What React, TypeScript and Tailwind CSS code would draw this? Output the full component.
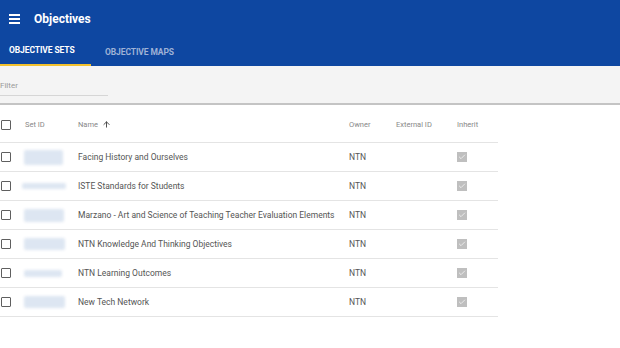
import { ArrowUp, Check } from 'lucide-react';

const rows = [
  { name: 'Facing History and Ourselves', id: 'w-[39px] h-[15px] ml-[0px]' },
  { name: 'ISTE Standards for Students', id: 'w-[44px] h-[6px] -ml-[2px]' },
  { name: 'Marzano - Art and Science of Teaching Teacher Evaluation Elements', id: 'w-[40px] h-[13px] ml-[0px]' },
  { name: 'NTN Knowledge And Thinking Objectives', id: 'w-[41px] h-[12px] ml-[0px]' },
  { name: 'NTN Learning Outcomes', id: 'w-[38px] h-[7px] ml-[0px]' },
  { name: 'New Tech Network', id: 'w-[41px] h-[12px] ml-[0px]' },
];

function Box() {
  return <div className="w-[10px] h-[10px] border-[1.5px] border-[#5f5f5f] rounded-[1px] bg-white" />;
}

function Inherit() {
  return (
    <div className="w-[10px] h-[10px] bg-[#bfbfbf] flex items-center justify-center">
      <Check size={8} strokeWidth={2} className="text-white" />
    </div>
  );
}

export default function App() {
  return (
    <div className="w-[620px] h-[348px] bg-white overflow-hidden font-['Roboto',sans-serif]">
      {/* app bar */}
      <div className="bg-[#0e47a1] h-[66px] flex flex-col">
        <div className="flex items-center h-[36px] pl-[9px] pt-[1px]">
          <div className="flex flex-col gap-[2px] w-[11px]">
            <div className="h-[2px] bg-white" />
            <div className="h-[2px] bg-white" />
            <div className="h-[2px] bg-white" />
          </div>
          <span className="ml-[14px] text-white font-bold text-[12px]">Objectives</span>
        </div>
        <div className="flex h-[30px]">
          <div className="w-[91px] flex flex-col">
            <div className="flex-1 flex items-center pl-[9px] pt-[1px] text-white font-bold text-[8.5px] tracking-[-0.1px]">
              OBJECTIVE SETS
            </div>
            <div className="h-[2px] bg-[#f2c12e]" />
          </div>
          <div className="pl-[14px] flex items-start pt-[10px] text-[#9fb2d6] font-bold text-[8.5px] tracking-[-0.1px]">
            OBJECTIVE MAPS
          </div>
        </div>
      </div>

      {/* filter bar */}
      <div className="bg-[#f4f4f4] h-[39px] border-b-[2px] border-[#c4c4c4] pt-[14px]">
        <div className="w-[108px] border-b border-[#d6d6d6] pb-[3px] text-[8px] text-[#9a9a9a]">Filter</div>
      </div>

      {/* table */}
      <div className="w-[498px] text-[8.5px] text-[#555]">
        <div className="flex items-center h-[38px] pt-[2px] border-b border-[#e4e4e4] text-[#888] text-[7.5px]">
          <div className="w-[24px] pl-[1px]"><Box /></div>
          <div className="w-[54px] pl-[1px]">Set ID</div>
          <div className="w-[271px] flex items-center gap-[4px]">
            Name <ArrowUp size={9} strokeWidth={2.5} className="text-[#444]" />
          </div>
          <div className="w-[47px]">Owner</div>
          <div className="w-[61px]">External ID</div>
          <div>Inherit</div>
        </div>
        {rows.map((r) => (
          <div key={r.name} className="flex items-center h-[29px] border-b border-[#e4e4e4]">
            <div className="w-[24px] pl-[1px]"><Box /></div>
            <div className="w-[54px]">
              <div className={`${r.id} bg-[#dde6f2] blur-[1.5px] rounded-[2px]`} />
            </div>
            <div className="w-[271px] whitespace-nowrap">{r.name}</div>
            <div className="w-[47px]">NTN</div>
            <div className="w-[61px]" />
            <Inherit />
          </div>
        ))}
      </div>
    </div>
  );
}
